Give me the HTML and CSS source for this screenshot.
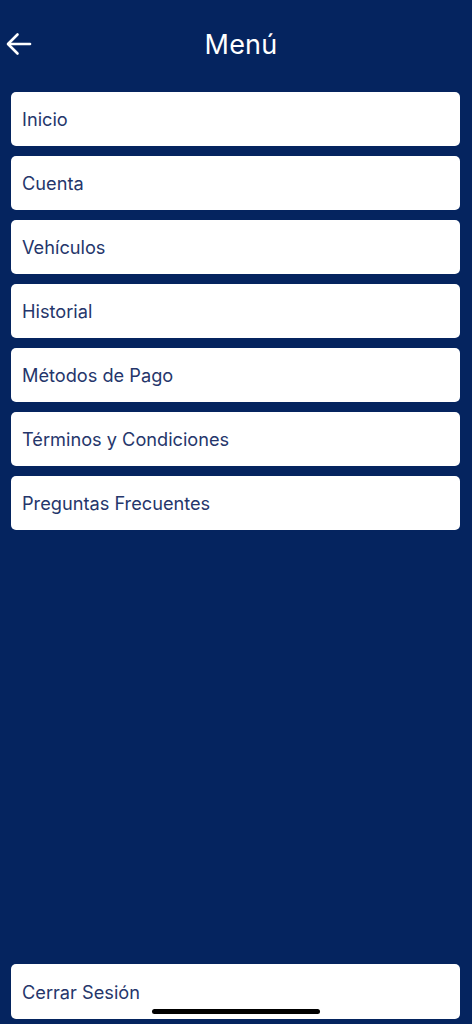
FILE: index.html
```html
<!DOCTYPE html>
<html lang="es">
<head>
<meta charset="utf-8">
<title>Menú</title>
<link rel="stylesheet" href="styles.css">
</head>
<body>
<div class="screen">
  <header class="topbar">
    <button class="back" aria-label="Volver">
      <svg width="26" height="24" viewBox="0 0 26 24" fill="none" stroke="#ffffff" stroke-width="2.6" stroke-linecap="round" stroke-linejoin="round">
        <path d="M24 12H2.5"/>
        <path d="M11.5 2.5L2 12l9.5 9.5"/>
      </svg>
    </button>
    <h1 class="title">Menú</h1>
  </header>
  <nav class="menu">
    <a class="item">Inicio</a>
    <a class="item">Cuenta</a>
    <a class="item">Vehículos</a>
    <a class="item">Historial</a>
    <a class="item">Métodos de Pago</a>
    <a class="item">Términos y Condiciones</a>
    <a class="item">Preguntas Frecuentes</a>
  </nav>
  <div class="footer">
    <a class="item item-logout">Cerrar Sesión</a>
  </div>
  <div class="home-indicator"></div>
</div>
</body>
</html>
```

FILE: styles.css
```css
* { box-sizing: border-box; }
html, body {
  margin: 0;
  padding: 0;
  height: 100%;
  background: #05245f;
}
body {
  font-family: Inter, "Noto Sans", "Liberation Sans", sans-serif;
}
.screen {
  position: relative;
  height: 1024px;
  display: flex;
  flex-direction: column;
  padding: 0 12px 5px 11px;
  background: #05245f;
}
.topbar {
  position: relative;
  height: 92px;
  display: flex;
  align-items: center;
  justify-content: center;
  padding-bottom: 4px;
  padding-left: 11px;
}
.back {
  position: absolute;
  left: -5px;
  top: 32px;
  width: 26px;
  height: 24px;
  padding: 0;
  border: 0;
  background: transparent;
  display: flex;
}
.title {
  margin: 0;
  color: #ffffff;
  font-size: 27px;
  font-weight: 400;
  letter-spacing: 0.2px;
}
.menu {
  display: flex;
  flex-direction: column;
  gap: 10px;
}
.item {
  display: flex;
  align-items: center;
  height: 54px;
  padding: 0 11px;
  background: #ffffff;
  border-radius: 5px;
  color: #25366b;
  font-size: 18.2px;
  font-weight: 400;
  text-decoration: none;
}
.footer {
  margin-top: auto;
}
.item-logout {
  height: 55px;
  padding-top: 1px;
}
.home-indicator {
  position: absolute;
  left: 152px;
  bottom: 10px;
  width: 168px;
  height: 5px;
  border-radius: 3px;
  background: #000000;
}
```
